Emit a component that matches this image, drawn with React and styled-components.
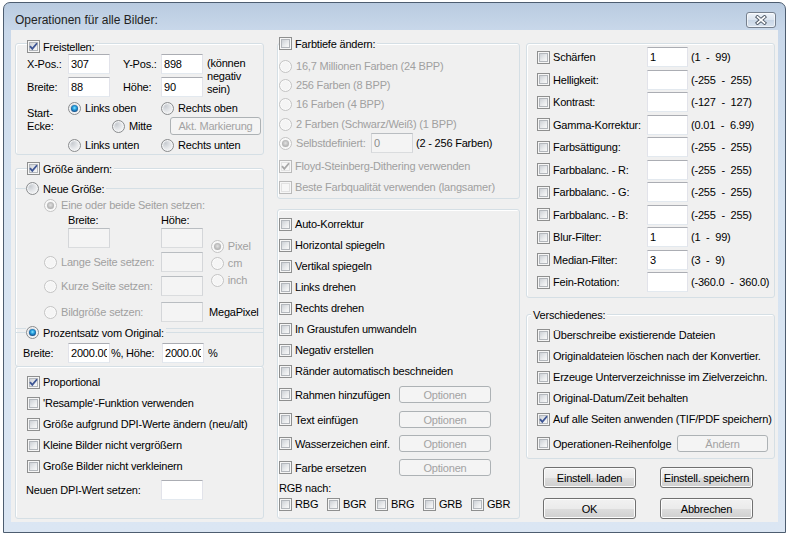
import React from "react";
import styled, { createGlobalStyle, css } from "styled-components";

const GlobalStyle = createGlobalStyle`
  html, body {
    margin: 0;
    padding: 0;
    background: #fff;
  }
  body {
    font-family: "Liberation Sans", Arial, sans-serif;
    font-size: 11px;
    letter-spacing: -0.2px;
  }
`;

const uiFont = css`
  font-family: "Liberation Sans", Arial, sans-serif;
  font-size: 11px;
  letter-spacing: -0.2px;
`;

const Desktop = styled.div`
  position: relative;
  width: 789px;
  height: 533px;
  overflow: hidden;
  background: #fff;
`;

const Window = styled.div`
  position: absolute;
  left: 3px;
  top: 2px;
  width: 783px;
  height: 531px;
  box-sizing: border-box;
  border: 1px solid #4d5d70;
  border-radius: 7px 7px 0 0;
  padding: 0 7px 10px;
  background: linear-gradient(180deg, #b9cbe0 0px, #c9d8ea 28px, #d6e3f1 200px, #dbe6f3 100%);
  display: flex;
  flex-direction: column;
`;

const TitleBar = styled.div`
  height: 27px;
  box-sizing: border-box;
  padding: 9px 2px 0 4px;
  display: flex;
  align-items: flex-start;
  justify-content: space-between;
`;

const Title = styled.div`
  margin-top: 1px;
  font-family: "Liberation Sans", Arial, sans-serif;
  font-size: 12px;
  letter-spacing: 0;
  line-height: 15px;
  color: #222;
`;

const CloseButton = styled.div`
  width: 30px;
  height: 16px;
  box-sizing: border-box;
  border: 1px solid #76808e;
  border-radius: 3px;
  background: linear-gradient(180deg, #eef3f9 0%, #dbe4ef 50%, #c9d6e6 51%, #d9e3ef 100%);
  box-shadow: inset 0 0 0 1px rgba(255, 255, 255, 0.6);
  display: flex;
  align-items: center;
  justify-content: center;
`;

const Client = styled.div`
  height: 492px;
  box-sizing: border-box;
  padding-left: 4px;
  background: #f0f0f0;
  display: flex;
`;

const Column = styled.div`
  flex: none;
  width: ${(p) => p.$w}px;
  margin-right: ${(p) => p.$mr || 0}px;
  padding-top: 13px;
  display: flex;
  flex-direction: column;
`;

const Group = styled.div`
  position: relative;
  box-sizing: border-box;
  height: ${(p) => p.$h}px;
  margin-top: ${(p) => p.$mt || 0}px;
  padding-left: ${(p) => p.$pl || 0}px;
  padding-top: ${(p) => p.$pt || 0}px;
  border: 1px solid #d5dfe5;
  border-radius: 3px;
  box-shadow: inset 1px 1px 0 #fff;
  display: flex;
  flex-direction: column;
  gap: ${(p) => p.$gap || 0}px;
`;

const SubGroup = styled.div`
  position: relative;
  box-sizing: border-box;
  height: ${(p) => (p.$h ? `${p.$h}px` : "auto")};
  flex: ${(p) => (p.$h ? "none" : "1")};
  margin-top: ${(p) => p.$mt || 0}px;
  padding-left: ${(p) => p.$pl || 0}px;
  border-top: 1px solid #d5dfe5;
  border-bottom: ${(p) => (p.$open ? "none" : "1px solid #d5dfe5")};
  display: flex;
  flex-direction: column;
`;

const Legend = styled.div`
  position: absolute;
  top: ${(p) => (p.$top !== undefined ? p.$top : -7)}px;
  left: ${(p) => p.$x}px;
  height: 13px;
  padding: 0 2px 0 ${(p) => p.$pad || 0}px;
  background: #f0f0f0;
  display: flex;
  align-items: center;
`;

const Row = styled.div`
  display: flex;
  align-items: center;
  flex: none;
  height: ${(p) => p.$h || 14}px;
  margin-top: ${(p) => p.$mt || 0}px;
  margin-left: ${(p) => p.$ml || 0}px;
`;

const Cell = styled.div`
  flex: none;
  width: ${(p) => p.$w}px;
  display: flex;
  align-items: center;
`;

const Stack = styled.div`
  display: flex;
  flex-direction: column;
  margin-top: ${(p) => p.$mt || 0}px;
  margin-left: ${(p) => p.$ml || 0}px;
  gap: ${(p) => p.$gap || 0}px;
`;

const Split = styled.div`
  display: flex;
  align-items: flex-start;
  margin-top: ${(p) => p.$mt || 0}px;
`;

const Label = styled.span`
  color: ${(p) => (p.$dis ? "#a0a0a0" : "#000")};
  white-space: pre;
  line-height: ${(p) => p.$lh || 14}px;
  margin-left: ${(p) => p.$ml || 0}px;
  margin-top: ${(p) => p.$mt || 0}px;
`;

const Field = styled.input`
  ${uiFont};
  flex: none;
  box-sizing: border-box;
  width: ${(p) => p.$w || 42}px;
  height: 20px;
  margin: 0;
  padding: 0 2px;
  outline: none;
  border: 1px solid;
  ${(p) =>
    p.disabled
      ? css`
          color: #8d8d8d;
          background: #f4f4f4;
          border-color: #b9bdc1 #d4d6d9 #dadcde #d4d6d9;
        `
      : css`
          color: #000;
          background: #fff;
          border-color: #abadb3 #e2e3ea #e3e9ef #e2e3ea;
        `}
`;

const PushButton = styled.button`
  ${uiFont};
  flex: none;
  box-sizing: border-box;
  width: ${(p) => p.$w}px;
  height: ${(p) => p.$h || 21}px;
  margin: 0;
  padding: 0;
  border-radius: 3px;
  border: 1px solid;
  ${(p) =>
    p.disabled
      ? css`
          color: #a3a3a3;
          border-color: #adb2b5;
          background: #f4f4f4;
        `
      : css`
          color: #000;
          border-color: #707070;
          background: linear-gradient(180deg, #f2f2f2 0%, #ebebeb 50%, #dddddd 51%, #cfcfcf 100%);
          box-shadow: inset 0 0 0 1px #fcfcfc;
        `}
`;

const ButtonGrid = styled.div`
  display: grid;
  grid-template-columns: 93px 93px;
  column-gap: 24px;
  row-gap: 10px;
  margin-top: 8px;
  padding-left: 17px;
`;

const Choice = styled.div`
  flex: none;
  display: flex;
  align-items: center;
  gap: ${(p) => p.$gap}px;
  width: ${(p) => (p.$w ? `${p.$w}px` : "auto")};
`;

const CheckSquare = styled.span`
  position: relative;
  flex: none;
  box-sizing: border-box;
  width: 13px;
  height: 13px;
  border: 1px solid ${(p) => (p.$dis ? "#bababa" : "#8e8f8f")};
  background: #f6f6f6;
  display: flex;
  align-items: center;
  justify-content: center;
  &::before {
    content: "";
    position: absolute;
    inset: 1px;
    border: 1px solid ${(p) => (p.$dis ? "#e2e2e2" : "#b3b7bc")};
    background: ${(p) =>
      p.$dis ? "#f7f7f7" : "linear-gradient(135deg, #cdd1d6 0%, #e8eaec 55%, #f9f9f9 100%)"};
  }
`;

const CheckMark = styled.svg`
  position: relative;
  display: block;
  width: 11px;
  height: 11px;
  path {
    fill: none;
    stroke: ${(p) => (p.$dis ? "#a8a8a8" : "#3d5594")};
    stroke-width: 1.8;
  }
`;

const RadioCircle = styled.span`
  position: relative;
  flex: none;
  box-sizing: border-box;
  width: 13px;
  height: 13px;
  border-radius: 50%;
  border: 1px solid ${(p) => (p.$dis ? "#c4c4c4" : "#8a8c8e")};
  background: ${(p) =>
    p.$dis ? "#f5f5f5" : "radial-gradient(circle at 32% 30%, #c8ccd1 0%, #e4e6e9 45%, #fbfbfb 90%)"};
  box-shadow: inset 0 0 0 1px ${(p) => (p.$dis ? "#fbfbfb" : "#f4f5f6")};
  &::after {
    content: "";
    display: ${(p) => (p.$on ? "block" : "none")};
    position: absolute;
    inset: 2px;
    border-radius: 50%;
    background: ${(p) =>
      p.$dis
        ? "radial-gradient(circle at 50% 45%, #e2e2e2 0%, #b9b9b9 55%, #9e9e9e 100%)"
        : "radial-gradient(circle at 50% 42%, #8fe6ff 0%, #2aa4e2 32%, #13528f 70%, #1c3a66 100%)"};
  }
`;

function Check({ checked, disabled, label, w }) {
  return (
    <Choice $gap={3} $w={w}>
      <CheckSquare $dis={disabled}>
        {checked && (
          <CheckMark viewBox="0 0 11 11" $dis={disabled}>
            <path d="M2 5.2 L4.3 7.9 L9 2.2" />
          </CheckMark>
        )}
      </CheckSquare>
      {label && <Label $dis={disabled}>{label}</Label>}
    </Choice>
  );
}

function Radio({ checked, disabled, label, w }) {
  return (
    <Choice $gap={4} $w={w}>
      <RadioCircle $on={checked} $dis={disabled} />
      {label && <Label $dis={disabled}>{label}</Label>}
    </Choice>
  );
}

const colorDepths = [
  ["16,7 Millionen Farben (24 BPP)", 15],
  ["256 Farben (8 BPP)", 5],
  ["16 Farben (4 BPP)", 5],
  ["2 Farben (Schwarz/Weiß) (1 BPP)", 6],
];

const transforms = [
  "Auto-Korrektur",
  "Horizontal spiegeln",
  "Vertikal spiegeln",
  "Links drehen",
  "Rechts drehen",
  "In Graustufen umwandeln",
  "Negativ erstellen",
  "Ränder automatisch beschneiden",
];

const withOptions = [
  ["Rahmen hinzufügen", 8],
  ["Text einfügen", 8],
  ["Wasserzeichen einf.", 7],
  ["Farbe ersetzen", 7],
];

const channelOrders = ["RBG", "BGR", "BRG", "GRB", "GBR"];

const adjustments = [
  ["Schärfen", "1", "(1  -  99)"],
  ["Helligkeit:", "", "(-255  -  255)"],
  ["Kontrast:", "", "(-127  -  127)"],
  ["Gamma-Korrektur:", "", "(0.01  -  6.99)"],
  ["Farbsättigung:", "", "(-255  -  255)"],
  ["Farbbalanc. - R:", "", "(-255  -  255)"],
  ["Farbbalanc. - G:", "", "(-255  -  255)"],
  ["Farbbalanc. - B:", "", "(-255  -  255)"],
  ["Blur-Filter:", "1", "(1  -  99)"],
  ["Median-Filter:", "3", "(3  -  9)"],
  ["Fein-Rotation:", "", "(-360.0  -  360.0)"],
];

const misc = [
  ["Überschreibe existierende Dateien", false],
  ["Originaldateien löschen nach der Konvertier.", false],
  ["Erzeuge Unterverzeichnisse im Zielverzeichn.", false],
  ["Original-Datum/Zeit behalten", false],
  ["Auf alle Seiten anwenden (TIF/PDF speichern)", true],
];

const resizeFlags = [
  ["Proportional", true],
  ["'Resample'-Funktion verwenden", false],
  ["Größe aufgrund DPI-Werte ändern (neu/alt)", false],
  ["Kleine Bilder nicht vergrößern", false],
  ["Große Bilder nicht verkleinern", false],
];

function CropGroup() {
  return (
    <Group $h={112} $pl={11}>
      <Legend $x={11} $top={-4}>
        <Check checked label="Freistellen:" />
      </Legend>
      <Split $mt={10}>
        <Stack $gap={3}>
          <Row $h={20}>
            <Cell $w={41}><Label>X-Pos.:</Label></Cell>
            <Field readOnly value="307" />
            <Cell $w={13} />
            <Cell $w={38}><Label>Y-Pos.:</Label></Cell>
            <Field readOnly value="898" />
          </Row>
          <Row $h={20}>
            <Cell $w={41}><Label>Breite:</Label></Cell>
            <Field readOnly value="88" />
            <Cell $w={13} />
            <Cell $w={38}><Label>Höhe:</Label></Cell>
            <Field readOnly value="90" />
          </Row>
        </Stack>
        <Label $lh={13} $ml={4} $mt={3}>{"(können\nnegativ\nsein)"}</Label>
      </Split>
      <Split $mt={4}>
        <Cell $w={41}>
          <Label $lh={13} $mt={6}>{"Start-\nEcke:"}</Label>
        </Cell>
        <Stack>
          <Row>
            <Radio checked label="Links oben" w={93} />
            <Radio label="Rechts oben" />
          </Row>
          <Row $h={18} $mt={2}>
            <Cell $w={44} />
            <Radio label="Mitte" w={58} />
            <PushButton disabled $w={91} $h={18}>Akt. Markierung</PushButton>
          </Row>
          <Row $mt={3}>
            <Radio label="Links unten" w={93} />
            <Radio label="Rechts unten" />
          </Row>
        </Stack>
      </Split>
    </Group>
  );
}

function ResizeGroup() {
  return (
    <Group $h={199} $mt={13}>
      <Legend $x={11}>
        <Check checked label="Größe ändern:" />
      </Legend>
      <SubGroup $h={141} $mt={19} $pl={28}>
        <Legend $x={10}>
          <Radio label="Neue Größe:" />
        </Legend>
        <Split>
          <Stack>
            <Row $mt={9}>
              <Radio checked disabled label="Eine oder beide Seiten setzen:" />
            </Row>
            <Row $mt={1} $ml={24}>
              <Cell $w={93}><Label>Breite:</Label></Cell>
              <Label>Höhe:</Label>
            </Row>
            <Row $h={20} $mt={1} $ml={24}>
              <Field disabled readOnly value="" />
              <Cell $w={51} />
              <Field disabled readOnly value="" />
            </Row>
            <Row $h={20} $mt={4}>
              <Radio disabled label="Lange Seite setzen:" w={117} />
              <Field disabled readOnly value="" />
            </Row>
            <Row $h={20} $mt={4}>
              <Radio disabled label="Kurze Seite setzen:" w={117} />
              <Field disabled readOnly value="" />
            </Row>
          </Stack>
          <Stack $mt={50} $ml={6} $gap={3}>
            <Row><Radio checked disabled label="Pixel" /></Row>
            <Row><Radio disabled label="cm" /></Row>
            <Row><Radio disabled label="inch" /></Row>
          </Stack>
        </Split>
        <Row $h={20} $mt={6}>
          <Radio disabled label="Bildgröße setzen:" w={117} />
          <Field disabled readOnly value="" />
          <Label $ml={6}>MegaPixel</Label>
        </Row>
      </SubGroup>
      <SubGroup $mt={3} $pl={7} $open>
        <Legend $x={10}>
          <Radio checked label="Prozentsatz vom Original:" />
        </Legend>
        <Row $h={20} $mt={10}>
          <Cell $w={45}><Label>Breite:</Label></Cell>
          <Field readOnly value="2000.00" />
          <Cell $w={16}><Label $ml={1}>%,</Label></Cell>
          <Cell $w={36}><Label>Höhe:</Label></Cell>
          <Field readOnly value="2000.00" />
          <Label $ml={4}>%</Label>
        </Row>
      </SubGroup>
    </Group>
  );
}

function ResizeOptionsGroup() {
  return (
    <Group $h={153} $mt={-1} $pl={11} $pt={8} $gap={7}>
      {resizeFlags.map(([text, on]) => (
        <Row key={text}>
          <Check checked={on} label={text} />
        </Row>
      ))}
      <Row $h={20}>
        <Cell $w={134}><Label $ml={-1}>Neuen DPI-Wert setzen:</Label></Cell>
        <Field readOnly value="" />
      </Row>
    </Group>
  );
}

function ColorDepthGroup() {
  return (
    <Group $h={156} $pl={1}>
      <Legend $x={1}>
        <Check label="Farbtiefe ändern:" />
      </Legend>
      {colorDepths.map(([text, mt]) => (
        <Row key={text} $mt={mt}>
          <Radio disabled label={text} />
        </Row>
      ))}
      <Row $h={20} $mt={2}>
        <Radio checked disabled label="Selbstdefiniert:" w={92} />
        <Field disabled readOnly value="0" />
        <Label $ml={3}>(2 - 256 Farben)</Label>
      </Row>
      <Row $mt={6}>
        <Check checked disabled label="Floyd-Steinberg-Dithering verwenden" />
      </Row>
      <Row $mt={7}>
        <Check disabled label="Beste Farbqualität verwenden (langsamer)" />
      </Row>
    </Group>
  );
}

function TransformGroup() {
  return (
    <Group $h={310} $mt={10} $pl={1}>
      {transforms.map((text) => (
        <Row key={text} $mt={7}>
          <Check label={text} />
        </Row>
      ))}
      {withOptions.map(([text, mt]) => (
        <Row key={text} $h={17} $mt={mt}>
          <Check label={text} w={120} />
          <PushButton disabled $w={92} $h={17}>Optionen</PushButton>
        </Row>
      ))}
      <Row $mt={5}>
        <Label>RGB nach:</Label>
      </Row>
      <Row $mt={2}>
        {channelOrders.map((text) => (
          <Check key={text} label={text} w={48} />
        ))}
      </Row>
    </Group>
  );
}

function AdjustGroup() {
  return (
    <Group $h={255} $pl={10} $pt={3} $gap={2.5}>
      {adjustments.map(([text, value, range]) => (
        <Row key={text} $h={20}>
          <Check label={text} w={110} />
          <Field $w={41} readOnly value={value} />
          <Label $ml={3}>{range}</Label>
        </Row>
      ))}
    </Group>
  );
}

function MiscGroup() {
  return (
    <Group $h={145} $mt={16} $pl={10} $pt={13} $gap={7}>
      <Legend $x={4} $pad={2}>
        <Label>Verschiedenes:</Label>
      </Legend>
      {misc.map(([text, on]) => (
        <Row key={text}>
          <Check checked={on} label={text} />
        </Row>
      ))}
      <Row $h={17} $mt={2}>
        <Check label="Operationen-Reihenfolge" w={140} />
        <PushButton disabled $w={91} $h={17}>Ändern</PushButton>
      </Row>
    </Group>
  );
}

export default function App() {
  return (
    <>
      <GlobalStyle />
      <Desktop>
        <Window>
          <TitleBar>
            <Title>Operationen für alle Bilder:</Title>
            <CloseButton>
              <svg width="12" height="10" viewBox="0 0 12 10">
                <path d="M2.5 2 L9.5 8 M9.5 2 L2.5 8" stroke="#4e5866" strokeWidth="3.6" strokeLinecap="square" />
                <path d="M2.5 2 L9.5 8 M9.5 2 L2.5 8" stroke="#fff" strokeWidth="1.7" strokeLinecap="square" />
              </svg>
            </CloseButton>
          </TitleBar>
          <Client>
            <Column $w={249} $mr={13}>
              <CropGroup />
              <ResizeGroup />
              <ResizeOptionsGroup />
            </Column>
            <Column $w={243} $mr={6}>
              <ColorDepthGroup />
              <TransformGroup />
            </Column>
            <Column $w={249}>
              <AdjustGroup />
              <MiscGroup />
              <ButtonGrid>
                <PushButton $w={93}>Einstell. laden</PushButton>
                <PushButton $w={93}>Einstell. speichern</PushButton>
                <PushButton $w={93}>OK</PushButton>
                <PushButton $w={93}>Abbrechen</PushButton>
              </ButtonGrid>
            </Column>
          </Client>
        </Window>
      </Desktop>
    </>
  );
}
